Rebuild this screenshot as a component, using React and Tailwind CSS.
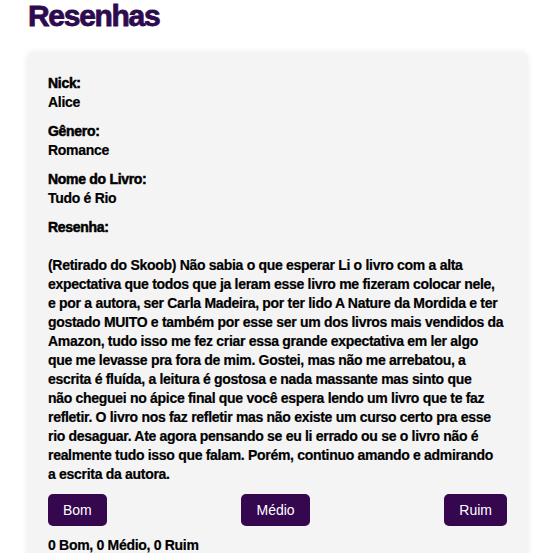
const impact = "font-['Liberation_Sans',Arial,sans-serif]";

const reviews = [
  {
    nick: "Alice",
    genero: "Romance",
    livro: "Tudo é Rio",
    // quebras de linha iguais às do card original
    texto: [
      "(Retirado do Skoob) Não sabia o que esperar Li o livro com a alta",
      "expectativa que todos que ja leram esse livro me fizeram colocar nele,",
      "e por a autora, ser Carla Madeira, por ter lido A Nature da Mordida e ter",
      "gostado MUITO e também por esse ser um dos livros mais vendidos da",
      "Amazon, tudo isso me fez criar essa grande expectativa em ler algo",
      "que me levasse pra fora de mim. Gostei, mas não me arrebatou, a",
      "escrita é fluída, a leitura é gostosa e nada massante mas sinto que",
      "não cheguei no ápice final que você espera lendo um livro que te faz",
      "refletir. O livro nos faz refletir mas não existe um curso certo pra esse",
      "rio desaguar. Ate agora pensando se eu li errado ou se o livro não é",
      "realmente tudo isso que falam. Porém, continuo amando e admirando",
      "a escrita da autora.",
    ],
  },
];

const Field = ({ label, value }) => (
  <div className="mb-[10px]">
    <div className="[-webkit-text-stroke:0.5px_black]">{label}</div>
    <div>{value}</div>
  </div>
);

const App = () => {
  return (
    <div className={`min-h-[553px] bg-white px-[27px] text-black ${impact}`}>
      <h1 className="pl-[1px] text-[30px] font-bold leading-[31px] tracking-[-1.3px] text-[#2e0a4f] [-webkit-text-stroke:0.8px_#2e0a4f]">
        Resenhas
      </h1>
      {reviews.map((r, i) => (
        <div
          key={i}
          className="mt-[21px] w-[501px] rounded-lg bg-[#f4f4f4] px-[21px] pt-[22px] pb-4 text-[14px] leading-[19px] font-bold tracking-[-0.3px] [-webkit-text-stroke:0.2px_black] shadow-[0_0_6px_rgba(0,0,0,0.08)]"
        >
          <Field label="Nick:" value={r.nick} />
          <Field label="Gênero:" value={r.genero} />
          <Field label="Nome do Livro:" value={r.livro} />
          <div className="[-webkit-text-stroke:0.5px_black]">Resenha:</div>
          <p className="mt-[19px]">
            {r.texto.map((linha, j) => (
              <span key={j} className="block whitespace-nowrap">
                {linha}
              </span>
            ))}
          </p>
          <div className="mt-[10px] flex justify-between font-normal tracking-normal [-webkit-text-stroke:0px]">
            <button className="h-8 rounded-[5px] bg-[#34074f] px-[15px] text-[14px] text-white">Bom</button>
            <button className="h-8 rounded-[5px] bg-[#34074f] px-[15px] text-[14px] text-white">Médio</button>
            <button className="h-8 rounded-[5px] bg-[#34074f] px-[15px] text-[14px] text-white">Ruim</button>
          </div>
          <div className="mt-[10px]">0 Bom, 0 Médio, 0 Ruim</div>
        </div>
      ))}
    </div>
  );
};

export default App;
